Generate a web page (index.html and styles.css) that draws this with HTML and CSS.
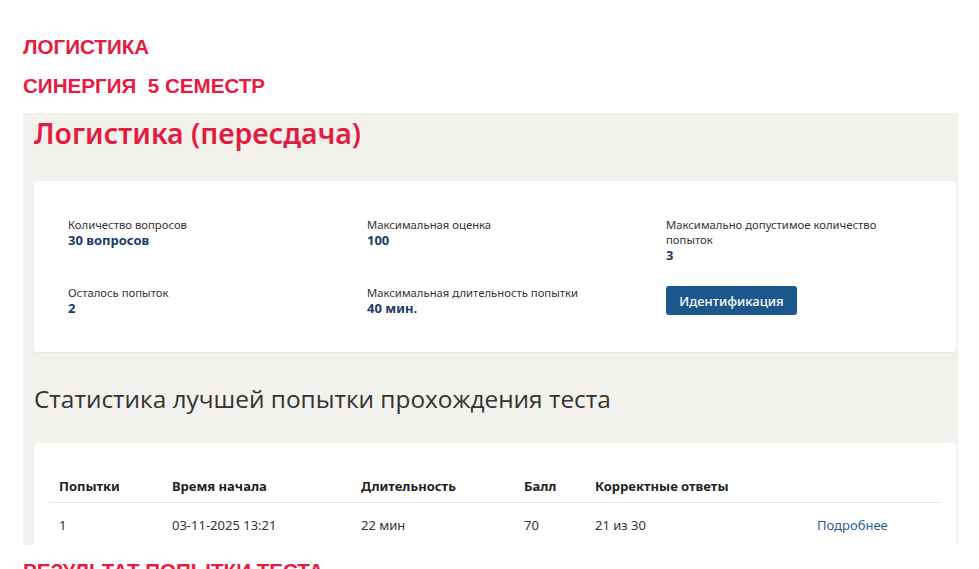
FILE: index.html
```html
<!DOCTYPE html>
<html lang="ru">
<head>
    <meta charset="UTF-8">
    <meta name="viewport" content="width=device-width, initial-scale=1.0">
    <title>Логистика</title>
    <link rel="stylesheet" href="styles.css">
</head>
<body>
    <h2 class="doc-head">ЛОГИСТИКА</h2>
    <h2 class="doc-head">СИНЕРГИЯ&nbsp; 5 СЕМЕСТР</h2>

    <!-- скриншот страницы теста -->
    <div class="shot">
        <h1 class="test-title">Логистика (пересдача)</h1>

        <div class="card info">
            <div class="info-item">
                <div class="info-label">Количество вопросов</div>
                <div class="info-value">30 вопросов</div>
            </div>
            <div class="info-item">
                <div class="info-label">Максимальная оценка</div>
                <div class="info-value">100</div>
            </div>
            <div class="info-item">
                <div class="info-label">Максимально допустимое количество<br>попыток</div>
                <div class="info-value">3</div>
            </div>
            <div class="info-item">
                <div class="info-label">Осталось попыток</div>
                <div class="info-value">2</div>
            </div>
            <div class="info-item">
                <div class="info-label">Максимальная длительность попытки</div>
                <div class="info-value">40 мин.</div>
            </div>
            <div class="info-item">
                <button class="btn">Идентификация</button>
            </div>
        </div>

        <h3 class="stat-title">Статистика лучшей попытки прохождения теста</h3>

        <div class="card stats">
            <table class="stat-table">
                <thead>
                    <tr>
                        <th class="c1">Попытки</th>
                        <th class="c2">Время начала</th>
                        <th class="c3">Длительность</th>
                        <th class="c4">Балл</th>
                        <th class="c5">Корректные ответы</th>
                        <th class="c6"></th>
                    </tr>
                </thead>
                <tbody>
                    <tr>
                        <td>1</td>
                        <td>03-11-2025 13:21</td>
                        <td>22 мин</td>
                        <td>70</td>
                        <td>21 из 30</td>
                        <td><a class="more" href="#">Подробнее</a></td>
                    </tr>
                </tbody>
            </table>
        </div>
    </div>

    <h2 class="doc-head">РЕЗУЛЬТАТ ПОПЫТКИ ТЕСТА</h2>
</body>
</html>
```

FILE: styles.css
```css
html,body{
    height: 100%;
}
body{
    margin: 0;
    padding: 35px 0 0 23px;
    background: #fff;
    font-family: "Liberation Sans", Arial, sans-serif;
    overflow: hidden;
}
.doc-head{
    margin: 0 0 15px;
    font-size: 20.6px;
    line-height: 24px;
    font-weight: bold;
    color: #e91a3e;
}
/* серая область — вырезанный скриншот */
.shot{
    width: 924px;
    height: 432px;
    padding: 0 0 0 11px;
    margin-bottom: 14px;
    background-color: #f2f1ee;
    overflow: hidden;
    font-family: "Noto Sans", "Open Sans", sans-serif;
}
.test-title{
    margin: 0;
    padding-top: 2px;
    font-size: 28.5px;
    line-height: 36px;
    font-weight: 600;
    color: #e31b3d;
}
.card{
    width: 922px;
    background: #fff;
    border-radius: 4px;
    box-shadow: 0 1px 2px rgba(0,0,0,0.05);
}
.info{
    margin-top: 30px;
    box-sizing: border-box;
    height: 171px;
    padding: 36px 0 0 34px;
    display: grid;
    grid-template-columns: 299px 299px 1fr;
    row-gap: 22px;
    align-items: start;
    align-content: start;
}
.info-label{
    font-size: 11.3px;
    line-height: 15px;
    color: #333;
}
.info-value{
    font-size: 13px;
    line-height: 16px;
    font-weight: bold;
    color: #1a3a6b;
}
.btn{
    margin-top: 1px;
    width: 131px;
    height: 29px;
    border: none;
    border-radius: 3px;
    background: #1b568c;
    color: #fff;
    font-family: "Noto Sans", "Open Sans", sans-serif;
    font-size: 13px;
    font-weight: 500;
    cursor: pointer;
}
.stat-title{
    margin: 31px 0 28px;
    font-family: "Open Sans", "Noto Sans", sans-serif;
    font-size: 24.4px;
    line-height: 32px;
    font-weight: 400;
    color: #333;
}
.stats{
    box-sizing: border-box;
    padding: 25px 15px 30px;
}
.stat-table{
    width: 100%;
    border-collapse: collapse;
    text-align: left;
}
.stat-table th{
    padding: 8px 10px 6px;
    font-size: 13px;
    line-height: 20px;
    font-weight: bold;
    color: #222;
    border-bottom: 1px solid #e6e6e6;
}
.stat-table td{
    padding: 12px 10px 8px;
    font-size: 13px;
    line-height: 20px;
    color: #333;
}
.c1{ width: 93px; }
.c2{ width: 169px; }
.c3{ width: 143px; }
.c4{ width: 51px; }
.c5{ width: 202px; }
.more{
    color: #2a5d95;
    text-decoration: none;
}
```
